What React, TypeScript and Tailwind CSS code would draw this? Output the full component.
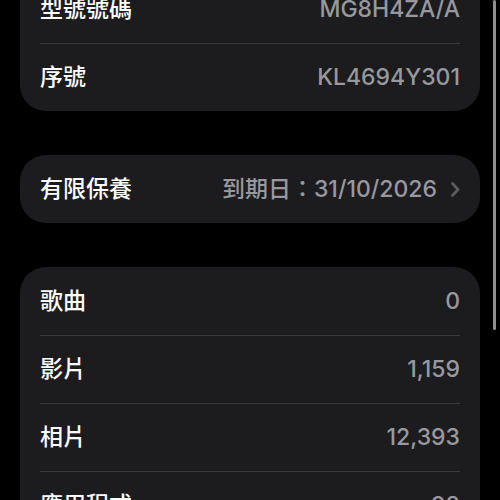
import React from 'react'

type RowData = { label: string; value: string; chevron?: boolean }

const Row = ({ label, value, chevron, first }: RowData & { first: boolean }) => (
  <div className={`h-[68px] flex items-center justify-between ${first ? '' : 'border-t border-[#38383c]'}`}>
    <span className="text-white text-[23px] font-medium">{label}</span>
    <span className="flex items-center gap-[14px] text-[#98989f] text-[23px] font-medium">
      {value}
      {chevron && (
        <svg width="9" height="15" viewBox="0 0 9 15" fill="none">
          <path d="M1.5 1.5 L7 7.5 L1.5 13.5" stroke="#5c5c61" strokeWidth="2.6" strokeLinecap="round" strokeLinejoin="round" />
        </svg>
      )}
    </span>
  </div>
)

const Card = ({ rows }: { rows: RowData[] }) => (
  <div className="mx-5 px-5 bg-[#1c1c1e] rounded-[26px]">
    {rows.map((r, i) => (
      <Row key={r.label} {...r} first={i === 0} />
    ))}
  </div>
)

export default function App() {
  return (
    <div className="relative h-[500px] w-[500px] overflow-hidden bg-black font-['Inter','Noto_Sans_CJK_TC',sans-serif]">
      <div className="flex flex-col gap-[44px] -mt-[25px]">
        <Card
          rows={[
            { label: '型號號碼', value: 'MG8H4ZA/A' },
            { label: '序號', value: 'KL4694Y301' },
          ]}
        />
        <Card rows={[{ label: '有限保養', value: '到期日：31/10/2026', chevron: true }]} />
        <Card
          rows={[
            { label: '歌曲', value: '0' },
            { label: '影片', value: '1,159' },
            { label: '相片', value: '12,393' },
            { label: '應用程式', value: '98' },
          ]}
        />
      </div>
      <div className="absolute right-[4px] top-0 w-[3px] h-[330px] rounded-full bg-[#8e8e93]" />
    </div>
  )
}
